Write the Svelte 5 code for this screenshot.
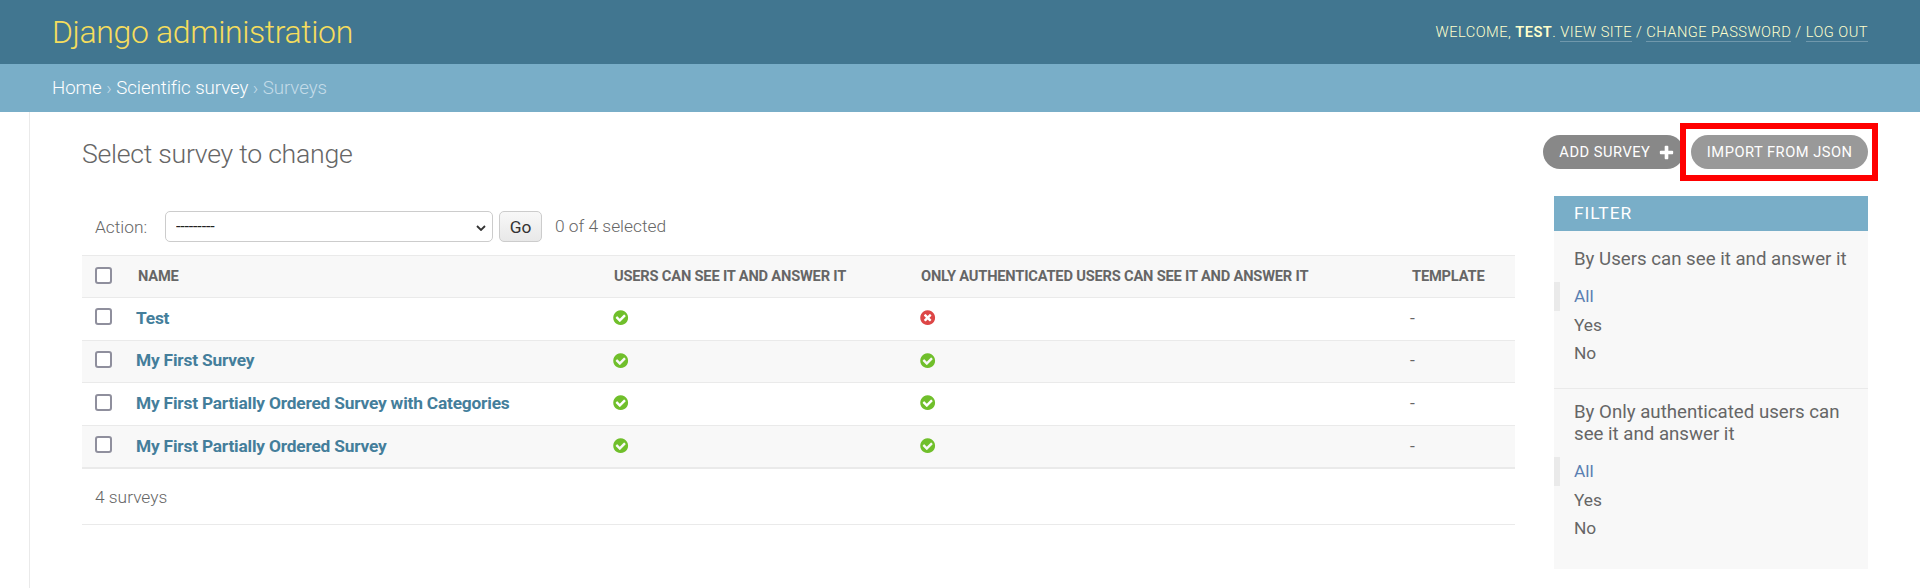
<script>
  const surveys = [
    { name: "Test", anon: true, auth: false },
    { name: "My First Survey", anon: true, auth: true },
    { name: "My First Partially Ordered Survey with Categories", anon: true, auth: true },
    { name: "My First Partially Ordered Survey", anon: true, auth: true },
  ];
  const filters = [
    { title: "By Users can see it and answer it", options: ["All", "Yes", "No"] },
    { title: "By Only authenticated users can see it and answer it", options: ["All", "Yes", "No"] },
  ];
  const yes = "M1412 734q0-28-18-46l-91-90q-19-19-45-19t-45 19l-408 407-226-226q-19-19-45-19t-45 19l-91 90q-18 18-18 46 0 27 18 45l362 362q19 19 45 19 27 0 46-19l543-543q18-18 18-45zm252 162q0 209-103 385.5t-279.5 279.5-385.5 103-385.5-103-279.5-279.5-103-385.5 103-385.5 279.5-279.5 385.5-103 385.5 103 279.5 279.5 103 385.5z";
  const no = "M1277 1122q0-26-19-45l-181-181 181-181q19-19 19-45 0-27-19-46l-90-90q-19-19-46-19-26 0-45 19l-181 181-181-181q-19-19-45-19-27 0-46 19l-90 90q-19 19-19 46 0 26 19 45l181 181-181 181q-19 19-19 45 0 27 19 46l90 90q19 19 46 19 26 0 45-19l181-181 181 181q19 19 45 19 27 0 46-19l90-90q19-19 19-46zm387-226q0 209-103 385.5t-279.5 279.5-385.5 103-385.5-103-279.5-279.5-103-385.5 103-385.5 279.5-279.5 385.5-103 385.5 103 279.5 279.5 103 385.5z";
</script>

{#snippet bool(value)}
  <svg class="bool" viewBox="0 0 1792 1792" width="17.33" height="17.33">
    <path fill={value ? "#70bf2b" : "#dd4646"} d={value ? yes : no} />
  </svg>
{/snippet}

<div class="page">
  <header class="header">
    <div class="branding">Django administration</div>
    <div class="user-tools">
      Welcome, <strong>test</strong>.
      <a href="#site">View site</a> /
      <a href="#password">Change password</a> /
      <a href="#logout">Log out</a>
    </div>
  </header>

  <nav class="breadcrumbs">
    <a href="#home">Home</a> › <a href="#app">Scientific survey</a> › Surveys
  </nav>

  <div class="main">
    <div class="toggle"></div>
    <main class="content">
      <div class="title-row">
        <h1>Select survey to change</h1>
        <ul class="object-tools">
          <li>
            <a class="add" href="#add">
              Add survey
              <svg viewBox="0 0 1792 1792" width="17" height="17">
                <path fill="#fff" d="M1600 796v192q0 40-28 68t-68 28h-416v416q0 40-28 68t-68 28h-192q-40 0-68-28t-28-68v-416h-416q-40 0-68-28t-28-68v-192q0-40 28-68t68-28h416v-416q0-40 28-68t68-28h192q40 0 68 28t28 68v416h416q40 0 68 28t28 68z" />
              </svg>
            </a>
          </li>
          <li class="marked">
            <a href="#import">Import from JSON</a>
            <div class="highlight"></div>
          </li>
        </ul>
      </div>

      <div class="columns">
        <div class="changelist">
          <div class="actions">
            <label for="action">Action:</label>
            <div class="select-wrap">
              <select id="action"><option>---------</option></select>
              <svg class="chevron" viewBox="0 0 10 6" width="10" height="6">
                <path d="M1 1l4 4 4-4" fill="none" stroke="#333" stroke-width="1.8" />
              </svg>
            </div>
            <button type="button">Go</button>
            <span class="counter">0 of 4 selected</span>
          </div>

          <table>
            <thead>
              <tr>
                <th class="check"><input type="checkbox" /></th>
                <th class="name">Name</th>
                <th class="anon">Users can see it and answer it</th>
                <th class="auth">Only authenticated users can see it and answer it</th>
                <th>Template</th>
              </tr>
            </thead>
            <tbody>
              {#each surveys as survey}
                <tr>
                  <td class="check"><input type="checkbox" /></td>
                  <td class="name"><a href="#survey">{survey.name}</a></td>
                  <td>{@render bool(survey.anon)}</td>
                  <td>{@render bool(survey.auth)}</td>
                  <td class="template">-</td>
                </tr>
              {/each}
            </tbody>
          </table>

          <p class="paginator">4 surveys</p>
        </div>

        <aside class="filter">
          <h2>Filter</h2>
          {#each filters as group}
            <section>
              <h3>{group.title}</h3>
              <ul>
                {#each group.options as option, i}
                  <li class:selected={i === 0}><a href="#filter">{option}</a></li>
                {/each}
              </ul>
            </section>
          {/each}
        </aside>
      </div>
    </main>
  </div>
</div>

<style>
  :global(body) {
    margin: 0;
    overflow: hidden;
    background: #fff;
    color: #333;
    font-family: Roboto, "Liberation Sans", sans-serif;
    font-size: 18.67px;
  }

  a {
    text-decoration: none;
  }

  .header {
    display: flex;
    align-items: center;
    justify-content: space-between;
    box-sizing: border-box;
    height: 64px;
    padding: 0 52px;
    background: #417690;
    color: #ffc;
  }

  .branding {
    font-size: 32px;
    font-weight: 300;
    letter-spacing: -0.37px;
    color: #f5dd5d;
  }

  .user-tools {
    font-size: 14.67px;
    font-weight: 300;
    letter-spacing: 0.46px;
    text-transform: uppercase;
  }

  .user-tools strong {
    font-weight: 600;
  }

  .user-tools a {
    color: #ffc;
    border-bottom: 1px solid rgba(255, 255, 255, 0.25);
  }

  .breadcrumbs {
    box-sizing: border-box;
    height: 48px;
    padding: 0 52px;
    line-height: 48px;
    letter-spacing: -0.05px;
    background: #79aec8;
    color: #c4dce8;
    font-weight: 300;
  }

  .breadcrumbs a {
    color: #fff;
  }

  .main {
    display: flex;
  }

  .toggle {
    flex: 0 0 29px;
    border-right: 1px solid #eaeaea;
    height: 476px;
  }

  .content {
    flex: 1;
    min-width: 0;
    padding: 26px 52px 0 52px;
  }

  .title-row {
    display: flex;
    justify-content: space-between;
    height: 58px;
  }

  h1 {
    margin: 0;
    font-size: 26.67px;
    font-weight: 300;
    letter-spacing: -0.27px;
    line-height: 32px;
    color: #666;
  }

  .object-tools {
    display: flex;
    align-items: flex-start;
    gap: 7px;
    margin: -3px 0 0;
    padding: 0;
    list-style: none;
  }

  .object-tools li {
    position: relative;
  }

  .object-tools a {
    display: flex;
    align-items: center;
    gap: 8px;
    height: 34px;
    padding: 0 15.5px;
    border-radius: 20px;
    background: #999;
    color: #fff;
    font-size: 14.67px;
    letter-spacing: 0.5px;
    text-transform: uppercase;
  }

  .object-tools a.add {
    background: #888;
    padding: 0 9px 0 16px;
  }

  .highlight {
    position: absolute;
    inset: -12px -10px -12px -11px;
    border: 6px solid #f00;
    pointer-events: none;
  }

  .columns {
    display: flex;
    gap: 39px;
    align-items: flex-start;
  }

  .changelist {
    flex: 1;
    min-width: 0;
  }

  .actions {
    display: flex;
    align-items: center;
    height: 31px;
    padding: 15px 13px 13px;
    color: #666;
    font-size: 17.33px;
    font-weight: 300;
  }

  .actions label {
    width: 70px;
  }

  .counter {
    margin-top: -2px;
  }

  .select-wrap {
    position: relative;
    height: 31px;
  }

  .chevron {
    position: absolute;
    right: 7px;
    top: 14px;
    pointer-events: none;
  }

  select {
    appearance: none;
    display: block;
    box-sizing: border-box;
    width: 328px;
    height: 31px;
    padding: 0 10px;
    border: 1px solid #ccc;
    border-radius: 5px;
    background: #fff;
    color: #222;
    font-family: Roboto, sans-serif;
    font-size: 16px;
    letter-spacing: -0.15px;
  }

  button {
    box-sizing: border-box;
    width: 43px;
    height: 31px;
    margin: 0 13px 0 6px;
    padding: 0;
    border: 1px solid #ccc;
    border-radius: 5px;
    background: linear-gradient(#f8f8f8, #e8e8e8);
    color: #333;
    font-family: Roboto, sans-serif;
    font-size: 17.33px;
  }

  table {
    width: 100%;
    border-collapse: collapse;
    table-layout: fixed;
    font-size: 17.33px;
    color: #666;
  }

  th {
    box-sizing: border-box;
    height: 42px;
    padding: 0 0 2px 8px;
    border-top: 1px solid #eaeaea;
    border-bottom: 1px solid #eaeaea;
    background: #f8f8f8;
    font-size: 14.67px;
    font-weight: 700;
    letter-spacing: -0.19px;
    text-align: left;
    text-transform: uppercase;
  }

  th.check {
    width: 48px;
    padding-bottom: 2px;
  }

  th.name {
    width: 476px;
    padding-left: 8px;
  }

  th.anon {
    width: 307px;
  }

  th.auth {
    width: 491px;
  }

  td {
    box-sizing: border-box;
    height: 42.67px;
    padding: 0 0 2px 8px;
    border-bottom: 1px solid #eaeaea;
    vertical-align: middle;
  }

  td.name {
    padding-left: 6px;
  }

  td.template {
    padding-left: 6px;
  }

  tbody tr:nth-child(even) td {
    background: #f8f8f8;
  }

  tbody tr:last-child td {
    border-bottom-width: 2px;
  }

  td.name a {
    color: #447e9b;
    font-weight: 700;
    font-size: 17.33px;
    letter-spacing: -0.2px;
  }

  .check {
    padding-left: 13px;
  }

  td.check {
    padding-bottom: 4px;
  }

  input[type="checkbox"] {
    appearance: none;
    display: block;
    box-sizing: border-box;
    width: 17px;
    height: 17px;
    margin: 0;
    border: 2px solid #8f8f9d;
    border-radius: 3px;
    background: #fff;
  }

  .bool {
    display: block;
    margin-left: -2px;
  }

  .paginator {
    box-sizing: border-box;
    height: 56px;
    margin: 0;
    padding: 0 13px;
    border-bottom: 1px solid #eaeaea;
    line-height: 56px;
    font-size: 17.33px;
    font-weight: 300;
    color: #666;
  }

  .filter {
    flex: 0 0 314px;
    height: 373px;
    background: #f8f8f8;
    color: #666;
  }

  .filter h2 {
    height: 35px;
    margin: 0;
    padding: 0 20px;
    background: #79aec8;
    color: #fff;
    font-size: 17.33px;
    font-weight: 400;
    letter-spacing: 1px;
    line-height: 35px;
    text-transform: uppercase;
  }

  .filter h3 {
    margin: 0;
    padding: 12px 20px 0;
    font-size: 18.67px;
    font-weight: 400;
    line-height: 22px;
  }

  .filter section:first-of-type h3 {
    padding-top: 17px;
  }

  .filter ul {
    margin: 0;
    padding: 12px 0 20px;
    list-style: none;
  }

  .filter section:first-of-type ul {
    border-bottom: 1px solid #eaeaea;
  }

  .filter li {
    padding-left: 20px;
    height: 28.67px;
    line-height: 28px;
    font-size: 17.33px;
  }

  .filter li a {
    color: #666;
  }

  .filter li.selected {
    padding-left: 14px;
    border-left: 6px solid #eaeaea;
  }

  .filter li.selected a {
    color: #5b80b2;
  }
</style>
